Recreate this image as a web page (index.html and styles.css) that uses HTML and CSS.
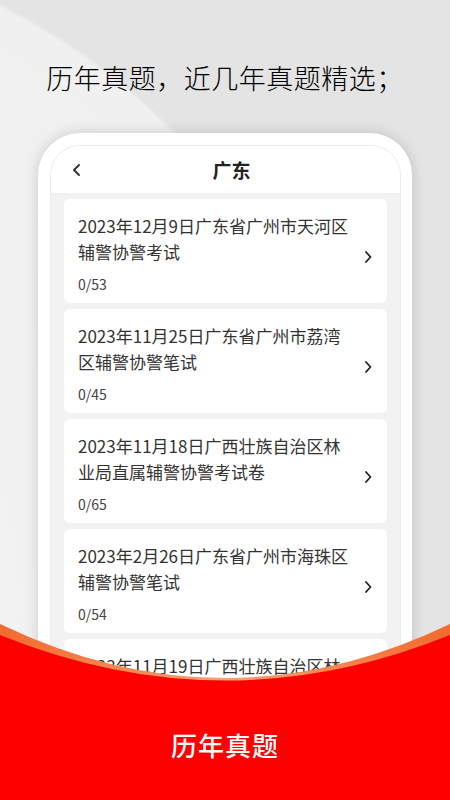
FILE: index.html
```html
<!DOCTYPE html>
<html lang="zh-CN">
<head>
    <meta charset="UTF-8">
    <meta name="viewport" content="width=device-width, initial-scale=1.0">
    <title>历年真题</title>
    <link rel="stylesheet" href="styles.css">
</head>
<body>
    <div class="page">
        <h1 class="slogan">历年真题，近几年真题精选；</h1>

        <div class="phone">
            <div class="screen">
                <div class="nav">
                    <svg class="back" width="9" height="12" viewBox="0 0 9 12">
                        <polyline points="7,1 2,6 7,11" fill="none" stroke="#333" stroke-width="1.9" stroke-linecap="round" stroke-linejoin="round"/>
                    </svg>
                    <span class="nav-title">广东</span>
                </div>

                <ul class="paper-list">
                    <li class="paper">
                        <div class="paper-info">
                            <p class="paper-name">2023年12月9日广东省广州市天河区辅警协警考试</p>
                            <p class="paper-count">0/53</p>
                        </div>
                        <svg class="arrow" width="8" height="12" viewBox="0 0 8 12">
                            <polyline points="2,1 6.5,6 2,11" fill="none" stroke="#222" stroke-width="1.8" stroke-linecap="round" stroke-linejoin="round"/>
                        </svg>
                    </li>
                    <li class="paper">
                        <div class="paper-info">
                            <p class="paper-name">2023年11月25日广东省广州市荔湾区辅警协警笔试</p>
                            <p class="paper-count">0/45</p>
                        </div>
                        <svg class="arrow" width="8" height="12" viewBox="0 0 8 12">
                            <polyline points="2,1 6.5,6 2,11" fill="none" stroke="#222" stroke-width="1.8" stroke-linecap="round" stroke-linejoin="round"/>
                        </svg>
                    </li>
                    <li class="paper">
                        <div class="paper-info">
                            <p class="paper-name">2023年11月18日广西壮族自治区林业局直属辅警协警考试卷</p>
                            <p class="paper-count">0/65</p>
                        </div>
                        <svg class="arrow" width="8" height="12" viewBox="0 0 8 12">
                            <polyline points="2,1 6.5,6 2,11" fill="none" stroke="#222" stroke-width="1.8" stroke-linecap="round" stroke-linejoin="round"/>
                        </svg>
                    </li>
                    <li class="paper">
                        <div class="paper-info">
                            <p class="paper-name">2023年2月26日广东省广州市海珠区辅警协警笔试</p>
                            <p class="paper-count">0/54</p>
                        </div>
                        <svg class="arrow" width="8" height="12" viewBox="0 0 8 12">
                            <polyline points="2,1 6.5,6 2,11" fill="none" stroke="#222" stroke-width="1.8" stroke-linecap="round" stroke-linejoin="round"/>
                        </svg>
                    </li>
                    <li class="paper">
                        <div class="paper-info">
                            <p class="paper-name">2023年11月19日广西壮族自治区林业局辅警协警考试</p>
                            <p class="paper-count">0/60</p>
                        </div>
                        <svg class="arrow" width="8" height="12" viewBox="0 0 8 12">
                            <polyline points="2,1 6.5,6 2,11" fill="none" stroke="#222" stroke-width="1.8" stroke-linecap="round" stroke-linejoin="round"/>
                        </svg>
                    </li>
                </ul>
            </div>
        </div>

        <div class="banner">
            <svg class="banner-bg" width="450" height="176" viewBox="0 0 450 176" preserveAspectRatio="none">
                <defs>
                    <linearGradient id="edge" x1="0" y1="0" x2="1" y2="0">
                        <stop offset="0" stop-color="#f26a2e"/>
                        <stop offset="0.5" stop-color="#f7a070"/>
                        <stop offset="1" stop-color="#f26a2e"/>
                    </linearGradient>
                </defs>
                <path d="M0,0 Q225,108 450,0 L450,176 L0,176 Z" fill="url(#edge)"/>
                <path d="M0,11 Q225,102 450,11 L450,176 L0,176 Z" fill="#fe0000"/>
            </svg>
            <div class="banner-text">历年真题</div>
        </div>
    </div>
</body>
</html>
```

FILE: styles.css
```css
* {
    box-sizing: border-box;
}
body {
    margin: 0;
    font-family: "Noto Sans CJK SC", "Noto Sans", sans-serif;
    background: #e4e4e4;
}
.page {
    position: relative;
    width: 450px;
    height: 800px;
    overflow: hidden;
    padding-top: 58px;
    background: radial-gradient(circle at -300px 600px, #f3f3f3 0, #f0f0f0 664px, #e4e4e4 668px);
}
.slogan {
    margin: 0;
    text-align: center;
    font-size: 27px;
    line-height: 40px;
    font-weight: 200;
    color: #000;
    letter-spacing: 0.5px;
}
.phone {
    margin: 35px 38px 0;
    height: 700px;
    padding: 12px 11px 0 12px;
    background: #fff;
    border-radius: 42px 42px 0 0;
    box-shadow: 0 0 14px rgba(0, 0, 0, 0.16);
}
.screen {
    height: 100%;
    background: #f2f2f2;
    border: 1px solid #ececec;
    border-radius: 30px 30px 0 0;
    overflow: hidden;
}
.nav {
    display: flex;
    align-items: center;
    height: 47px;
    padding-left: 21px;
    background: #fff;
}
.nav-title {
    flex: 1;
    text-align: center;
    margin-right: 18px;
    font-size: 19px;
    font-weight: 700;
    color: #222;
}
.paper-list {
    list-style: none;
    margin: 0;
    padding: 6px 13px 0 13px;
    display: flex;
    flex-direction: column;
    gap: 6px;
}
.paper {
    display: flex;
    padding: 14px 0 10px 14px;
    background: #fff;
    border-radius: 6px;
}
.paper-info {
    width: 272px;
}
.paper-name {
    margin: 0;
    font-size: 17px;
    line-height: 26px;
    color: #333;
}
.paper-count {
    margin: 10px 0 0;
    font-size: 14px;
    line-height: 18px;
    color: #444;
}
.arrow {
    margin: 38px 15px 0 auto;
    flex-shrink: 0;
}
.banner {
    position: absolute;
    left: 0;
    bottom: 0;
    width: 450px;
    height: 176px;
    padding-top: 104px;
}
.banner-bg {
    position: absolute;
    left: 0;
    top: 0;
}
.banner-text {
    position: relative;
    text-align: center;
    font-size: 26px;
    line-height: 34px;
    font-weight: 500;
    color: #fff;
    letter-spacing: 1px;
}
```
